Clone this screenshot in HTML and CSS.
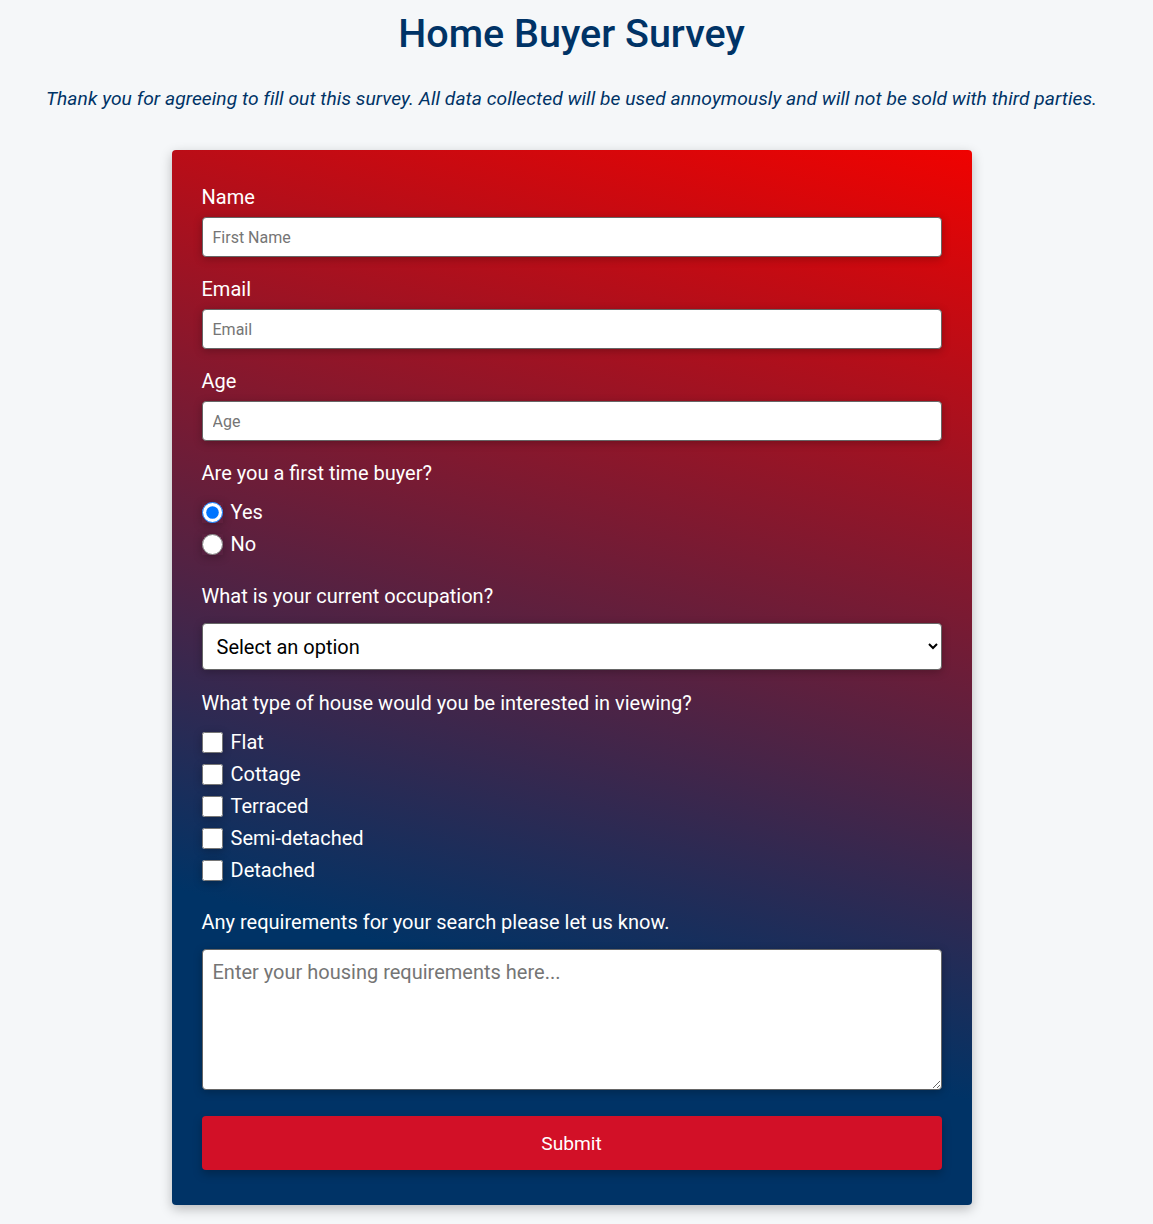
FILE: index.html
```html
<!DOCTYPE html>
<html lang="en">
<head>
<meta charset="utf-8">
<title>Home Buyer Survey</title>
<link rel="stylesheet" href="styles.css">
</head>
<body>
<header class="header">
  <h1 class="title">Home Buyer Survey</h1>
  <p class="intro">Thank you for agreeing to fill out this survey. All data collected will be used annoymously and will not be sold with third parties.</p>
</header>
<form class="card">
  <div class="group">
    <label class="label" for="name">Name</label>
    <input class="field" id="name" type="text" placeholder="First Name">
  </div>
  <div class="group">
    <label class="label" for="email">Email</label>
    <input class="field" id="email" type="email" placeholder="Email">
  </div>
  <div class="group">
    <label class="label" for="age">Age</label>
    <input class="field" id="age" type="number" placeholder="Age">
  </div>
  <div class="group group-choices">
    <p class="label">Are you a first time buyer?</p>
    <div class="choices">
      <label class="choice"><input class="radio" type="radio" name="first" checked> Yes</label>
      <label class="choice"><input class="radio" type="radio" name="first"> No</label>
    </div>
  </div>
  <div class="group group-select">
    <label class="label label-wide" for="occ">What is your current occupation?</label>
    <select class="select" id="occ">
      <option>Select an option</option>
    </select>
  </div>
  <div class="group group-choices">
    <p class="label">What type of house would you be interested in viewing?</p>
    <div class="choices">
      <label class="choice"><input class="check" type="checkbox"> Flat</label>
      <label class="choice"><input class="check" type="checkbox"> Cottage</label>
      <label class="choice"><input class="check" type="checkbox"> Terraced</label>
      <label class="choice"><input class="check" type="checkbox"> Semi-detached</label>
      <label class="choice"><input class="check" type="checkbox"> Detached</label>
    </div>
  </div>
  <div class="group">
    <label class="label label-wide" for="req">Any requirements for your search please let us know.</label>
    <textarea class="area" id="req" placeholder="Enter your housing requirements here..."></textarea>
  </div>
  <button class="submit" type="button">Submit</button>
</form>
</body>
</html>
```
FILE: styles.css
```css
* { box-sizing: border-box; }
html, body { margin: 0; padding: 0; }
body {
  background: #f5f7f9;
  font-family: Roboto, "Noto Sans", "Liberation Sans", sans-serif;
  color: #fff;
  padding: 0 10px 40px 0;
}
.header {
  text-align: center;
  color: #003366;
}
.title {
  margin: 0;
  padding-top: 10px;
  font-size: 39.5px;
  line-height: 48px;
  font-weight: 500;
}
.intro {
  margin: 27px 0 0;
  font-size: 19.2px;
  letter-spacing: 0.06px;
  line-height: 28px;
  font-style: italic;
}
.card {
  width: 800px;
  margin: 37px auto 0;
  padding: 35px 30px 35px;
  border-radius: 4px;
  background: linear-gradient(195deg, #f00200 0%, #003366 75%);
  box-shadow: 0 4px 12px rgba(0, 0, 0, 0.25);
  display: flex;
  flex-direction: column;
}
.group {
  display: flex;
  flex-direction: column;
  margin-bottom: 20px;
}
.group-choices { margin-bottom: 24px; }
.group-select { margin-bottom: 21px; }
.label {
  margin: 0 0 8px;
  font-size: 20px;
  line-height: 24px;
  color: #fff;
}
.label-wide { margin-bottom: 15px; }
.group-choices .label { margin-bottom: 11px; }
.field {
  height: 40px;
  width: 100%;
  border: 1px solid #666;
  border-radius: 4px;
  padding: 0 10px;
  font-family: inherit;
  font-size: 16px;
  background: #fff;
  box-shadow: 0 2px 8px rgba(0, 0, 0, 0.25);
}
.field::placeholder, .area::placeholder { color: #757575; }
.choices { display: flex; flex-direction: column; }
.choice {
  display: flex;
  align-items: center;
  height: 32px;
  font-size: 20px;
  gap: 8px;
}
.radio, .check {
  width: 21px;
  height: 21px;
  margin: 0;
  flex: none;
  box-shadow: 0 2px 8px rgba(0, 0, 0, 0.25);
}
.radio { border-radius: 50%; }
.select {
  height: 47px;
  width: 100%;
  border: 1px solid #666;
  border-radius: 4px;
  padding: 0 10px;
  font-family: inherit;
  font-size: 20px;
  color: #000;
  background: #fff;
  box-shadow: 0 2px 8px rgba(0, 0, 0, 0.25);
}
.area {
  height: 141px;
  width: 100%;
  border: 1px solid #666;
  border-radius: 4px;
  padding: 10px 10px;
  font-family: inherit;
  font-size: 20px;
  line-height: 24px;
  background: #fff;
  box-shadow: 0 2px 8px rgba(0, 0, 0, 0.25);
  resize: vertical;
}
.submit {
  margin-top: 6px;
  height: 54px;
  width: 100%;
  border: none;
  border-radius: 4px;
  background: #d21027;
  color: #fff;
  font-family: inherit;
  font-size: 19.2px;
  box-shadow: 0 4px 10px rgba(0, 0, 0, 0.25);
}
```
